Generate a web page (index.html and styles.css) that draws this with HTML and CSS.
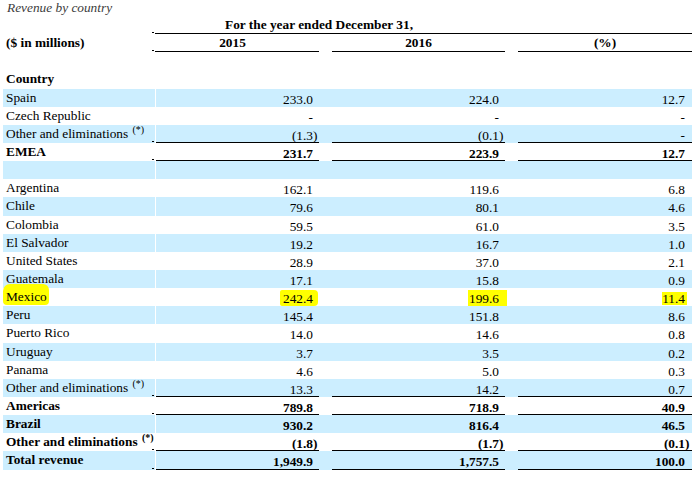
FILE: index.html
```html
<!DOCTYPE html>
<html>
<head>
<meta charset="utf-8">
<title>Revenue by country</title>
<link rel="stylesheet" href="styles.css">
</head>
<body>
<div class="page">
  <div class="title">Revenue by country</div>

  <div class="row ul">
    <div class="lab"></div>
    <div class="h1cell">For the year ended December 31,</div>
  </div>
  <div class="row ul head2">
    <div class="lab">($ in millions)</div>
    <div class="hc first">2015</div>
    <div class="g"></div>
    <div class="hc">2016</div>
    <div class="g"></div>
    <div class="hc">(%)</div>
  </div>
  <div class="row">
    <div class="lab"></div><div class="sep"></div><div class="v"></div><div class="g"></div><div class="v"></div><div class="g"></div><div class="v last"></div>
  </div>
  <div class="row bold">
    <div class="lab">Country</div><div class="sep"></div><div class="v"></div><div class="g"></div><div class="v"></div><div class="g"></div><div class="v last"></div>
  </div>

  <div class="row blue">
    <div class="lab">Spain</div><div class="sep"></div><div class="v">233.0<span class="rp"></span></div><div class="g"></div><div class="v">224.0<span class="rp"></span></div><div class="g"></div><div class="v last">12.7<span class="rp"></span></div>
  </div>
  <div class="row">
    <div class="lab">Czech Republic</div><div class="sep"></div><div class="v">-<span class="rp"></span></div><div class="g"></div><div class="v">-<span class="rp"></span></div><div class="g"></div><div class="v last">-<span class="rp"></span></div>
  </div>
  <div class="row blue ul">
    <div class="lab">Other and eliminations <sup class="ast">(*)</sup></div><div class="sep"></div><div class="v">(1.3<span class="rp">)</span></div><div class="g"></div><div class="v">(0.1<span class="rp">)</span></div><div class="g"></div><div class="v last">-<span class="rp"></span></div>
  </div>
  <div class="row bold ul">
    <div class="lab">EMEA</div><div class="sep"></div><div class="v">231.7<span class="rp"></span></div><div class="g"></div><div class="v">223.9<span class="rp"></span></div><div class="g"></div><div class="v last">12.7<span class="rp"></span></div>
  </div>
  <div class="row blue">
    <div class="lab"></div><div class="sep"></div><div class="v"></div><div class="g"></div><div class="v"></div><div class="g"></div><div class="v last"></div>
  </div>

  <div class="row">
    <div class="lab">Argentina</div><div class="sep"></div><div class="v">162.1<span class="rp"></span></div><div class="g"></div><div class="v">119.6<span class="rp"></span></div><div class="g"></div><div class="v last">6.8<span class="rp"></span></div>
  </div>
  <div class="row blue">
    <div class="lab">Chile</div><div class="sep"></div><div class="v">79.6<span class="rp"></span></div><div class="g"></div><div class="v">80.1<span class="rp"></span></div><div class="g"></div><div class="v last">4.6<span class="rp"></span></div>
  </div>
  <div class="row">
    <div class="lab">Colombia</div><div class="sep"></div><div class="v">59.5<span class="rp"></span></div><div class="g"></div><div class="v">61.0<span class="rp"></span></div><div class="g"></div><div class="v last">3.5<span class="rp"></span></div>
  </div>
  <div class="row blue">
    <div class="lab">El Salvador</div><div class="sep"></div><div class="v">19.2<span class="rp"></span></div><div class="g"></div><div class="v">16.7<span class="rp"></span></div><div class="g"></div><div class="v last">1.0<span class="rp"></span></div>
  </div>
  <div class="row">
    <div class="lab">United States</div><div class="sep"></div><div class="v">28.9<span class="rp"></span></div><div class="g"></div><div class="v">37.0<span class="rp"></span></div><div class="g"></div><div class="v last">2.1<span class="rp"></span></div>
  </div>
  <div class="row blue">
    <div class="lab">Guatemala</div><div class="sep"></div><div class="v">17.1<span class="rp"></span></div><div class="g"></div><div class="v">15.8<span class="rp"></span></div><div class="g"></div><div class="v last">0.9<span class="rp"></span></div>
  </div>
  <div class="row">
    <div class="lab"><span class="mk-lab">Mexico</span></div><div class="sep"></div><div class="v"><span class="mk mk-a">242.4<span class="rp"></span></span></div><div class="g"></div><div class="v"><span class="mk mk-b">199.6<span class="rp"></span></span></div><div class="g"></div><div class="v last"><span class="mk-c">11.4</span><span class="rp"></span></div>
  </div>
  <div class="row blue">
    <div class="lab">Peru</div><div class="sep"></div><div class="v">145.4<span class="rp"></span></div><div class="g"></div><div class="v">151.8<span class="rp"></span></div><div class="g"></div><div class="v last">8.6<span class="rp"></span></div>
  </div>
  <div class="row">
    <div class="lab">Puerto Rico</div><div class="sep"></div><div class="v">14.0<span class="rp"></span></div><div class="g"></div><div class="v">14.6<span class="rp"></span></div><div class="g"></div><div class="v last">0.8<span class="rp"></span></div>
  </div>
  <div class="row blue">
    <div class="lab">Uruguay</div><div class="sep"></div><div class="v">3.7<span class="rp"></span></div><div class="g"></div><div class="v">3.5<span class="rp"></span></div><div class="g"></div><div class="v last">0.2<span class="rp"></span></div>
  </div>
  <div class="row">
    <div class="lab">Panama</div><div class="sep"></div><div class="v">4.6<span class="rp"></span></div><div class="g"></div><div class="v">5.0<span class="rp"></span></div><div class="g"></div><div class="v last">0.3<span class="rp"></span></div>
  </div>
  <div class="row blue ul">
    <div class="lab">Other and eliminations <sup class="ast">(*)</sup></div><div class="sep"></div><div class="v">13.3<span class="rp"></span></div><div class="g"></div><div class="v">14.2<span class="rp"></span></div><div class="g"></div><div class="v last">0.7<span class="rp"></span></div>
  </div>
  <div class="row bold ul">
    <div class="lab">Americas</div><div class="sep"></div><div class="v">789.8<span class="rp"></span></div><div class="g"></div><div class="v">718.9<span class="rp"></span></div><div class="g"></div><div class="v last">40.9<span class="rp"></span></div>
  </div>
  <div class="row blue bold">
    <div class="lab">Brazil</div><div class="sep"></div><div class="v">930.2<span class="rp"></span></div><div class="g"></div><div class="v">816.4<span class="rp"></span></div><div class="g"></div><div class="v last">46.5<span class="rp"></span></div>
  </div>
  <div class="row bold ul">
    <div class="lab">Other and eliminations <sup class="ast">(*)</sup></div><div class="sep"></div><div class="v">(1.8<span class="rp">)</span></div><div class="g"></div><div class="v">(1.7<span class="rp">)</span></div><div class="g"></div><div class="v last">(0.1<span class="rp">)</span></div>
  </div>
  <div class="row blue bold ul">
    <div class="lab">Total revenue</div><div class="sep"></div><div class="v">1,949.9<span class="rp"></span></div><div class="g"></div><div class="v">1,757.5<span class="rp"></span></div><div class="g"></div><div class="v last">100.0<span class="rp"></span></div>
  </div>
</div>
</body>
</html>
```

FILE: styles.css
```css
html, body {
  margin: 0;
  padding: 0;
  background: #ffffff;
}

body {
  font-family: "Liberation Serif", "Times New Roman", serif;
  font-size: 13.33px;
  color: #000000;
}

.page {
  width: 689px;
  padding-left: 3px;
  overflow: hidden;
}

.title {
  height: 16px;
  line-height: 16px;
  padding-left: 4px;
  font-style: italic;
  color: #3c3c3c;
}

.row {
  display: grid;
  grid-template-columns: 152px 1px 163px 13px 173px 13px 174px;
  height: 18.15px;
}

.row > div {
  box-sizing: border-box;
  height: 18.15px;
  white-space: nowrap;
}

.lab {
  position: relative;
  padding-left: 3px;
  line-height: 18px;
}

.v {
  text-align: right;
  line-height: 15px;
  padding-top: 3px;
  padding-right: 1px;
}

.v.last {
  padding-right: 2px;
}

.rp {
  display: inline-block;
  width: 5px;
  text-align: left;
}

.blue {
  background: #cceeff;
}

.blue .sep {
  background: #ffffff;
}

.bold {
  font-weight: bold;
}

.ul .v {
  border-bottom: 1px solid #000000;
}

.ul .lab::after {
  content: "";
  position: absolute;
  right: 1px;
  bottom: 1px;
  width: 2px;
  height: 1px;
  background: #000000;
}

.h1cell {
  grid-column: 2 / -1;
  padding-left: 70px;
  line-height: 18px;
  font-weight: bold;
  border-bottom: 1px solid #000000;
}

.head2 {
  font-weight: bold;
}

.head2 .lab {
  line-height: 18px;
}

.hc {
  text-align: center;
  line-height: 18px;
  border-bottom: 1px solid #000000;
}

.hc.first {
  grid-column: 2 / 4;
  padding-right: 9px;
}

.ast {
  font-size: 10px;
  vertical-align: 5px;
  line-height: 0;
  margin-left: 1px;
}

.mk-lab {
  display: inline-block;
  background: #ffff00;
  line-height: 15px;
  padding: 5px 2px 1px 3px;
  margin: -5px 0 0 -3px;
  border-radius: 7px 6px 4px 4px;
}

.mk {
  display: inline-block;
  background: #ffff00;
  line-height: 15px;
  padding-top: 1px;
  margin-top: -1px;
}

.mk-a {
  padding-left: 3px;
  border-radius: 2px 4px 4px 2px;
}

.mk-b {
  padding-left: 1px;
  padding-right: 3px;
  margin-right: -3px;
}

.mk-c {
  display: inline-block;
  background: #ffff00;
  line-height: 13px;
  padding: 0 2px 0 0;
  margin-right: -2px;
}
```
